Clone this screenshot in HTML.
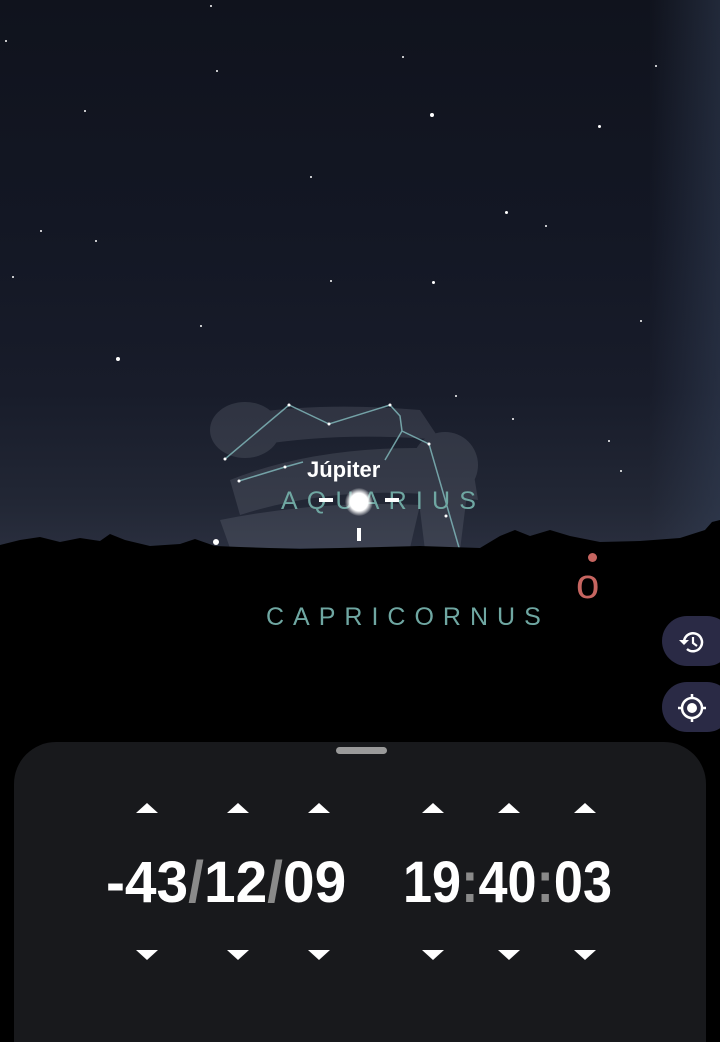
<!DOCTYPE html>
<html><head><meta charset="utf-8"><style>
html,body{margin:0;padding:0}
body{width:720px;height:1005px;overflow:hidden;position:relative;background:#000;font-family:"Liberation Sans",sans-serif}
.sky{position:absolute;left:0;top:0;width:720px;height:560px;background:linear-gradient(180deg,#10131d 0%,#131724 40%,#181c2a 70%,#222735 90%,#2b3040 100%)}
.mw{position:absolute;right:0;top:0;width:70px;height:560px;background:linear-gradient(90deg,rgba(40,50,70,0),rgba(55,68,92,.45))}
.s{position:absolute;background:#fff;border-radius:50%}
.ground{position:absolute;left:0;top:552px;width:720px;height:460px;background:#000}
.lbl{position:absolute;color:#6fa7a2;font-size:25px;white-space:nowrap}
.btn{position:absolute;left:662px;width:70px;height:50px;border-radius:25px;background:#2a2a45}
.panel{position:absolute;left:14px;top:742px;width:692px;height:300px;background:#18191c;border-radius:42px 42px 0 0}
.handle{position:absolute;left:336px;top:747px;width:51px;height:7px;border-radius:4px;background:#9a9a9a}
.up,.dn{position:absolute;width:0;height:0;border-left:11px solid transparent;border-right:11px solid transparent}
.up{top:803px;border-bottom:10px solid #fff}
.dn{top:950px;border-top:10px solid #fff}
.num{position:absolute;top:848px;color:#fff;font-weight:bold;font-size:58px;line-height:70px;white-space:nowrap;transform-origin:0 0}
.g{color:#8a8a8a}
</style></head><body>
<div class="sky"></div><div class="mw"></div>
<div class="s" style="left:430px;top:113px;width:4px;height:4px"></div>
<div class="s" style="left:116px;top:357px;width:4px;height:4px"></div>
<div class="s" style="left:505px;top:211px;width:3px;height:3px"></div>
<div class="s" style="left:432px;top:281px;width:3px;height:3px"></div>
<div class="s" style="left:598px;top:125px;width:3px;height:3px"></div>
<div class="s" style="left:402px;top:56px;width:2px;height:2px"></div>
<div class="s" style="left:216px;top:70px;width:2px;height:2px"></div>
<div class="s" style="left:84px;top:110px;width:2px;height:2px"></div>
<div class="s" style="left:210px;top:5px;width:2px;height:2px"></div>
<div class="s" style="left:545px;top:225px;width:2px;height:2px"></div>
<div class="s" style="left:12px;top:276px;width:2px;height:2px"></div>
<div class="s" style="left:310px;top:176px;width:2px;height:2px"></div>
<div class="s" style="left:512px;top:418px;width:2px;height:2px"></div>
<div class="s" style="left:455px;top:395px;width:2px;height:2px"></div>
<div class="s" style="left:640px;top:320px;width:2px;height:2px"></div>
<div class="s" style="left:200px;top:325px;width:2px;height:2px"></div>
<div class="s" style="left:608px;top:440px;width:2px;height:2px"></div>
<div class="s" style="left:5px;top:40px;width:2px;height:2px"></div>
<div class="s" style="left:655px;top:65px;width:2px;height:2px"></div>
<div class="s" style="left:40px;top:230px;width:2px;height:2px"></div>
<div class="s" style="left:95px;top:240px;width:2px;height:2px"></div>
<div class="s" style="left:330px;top:280px;width:2px;height:2px"></div>
<div class="s" style="left:620px;top:470px;width:2px;height:2px"></div>
<div class="s" style="left:710px;top:530px;width:2px;height:2px"></div>
<svg style="position:absolute;left:0;top:0" width="720" height="560">
<g fill="#8a8f9c" opacity=".2">
<ellipse cx="245" cy="430" rx="35" ry="28"/><path d="M215 420 Q300 400 420 410 L440 440 Q330 430 230 450Z"/>
<path d="M230 480 Q330 440 470 450 L478 500 Q350 480 240 515Z"/>
<ellipse cx="445" cy="465" rx="33" ry="33"/><path d="M415 470 L470 470 L460 550 L425 550Z"/>
<path d="M220 520 Q320 500 420 505 L410 548 L230 548Z"/>
</g>
<g stroke="#7fb5b8" stroke-width="1.5" fill="none" opacity=".85">
<path d="M225 459 L289 405 L329 424 L390 405 L400 416 L402 431 L429 444 L460 551"/>
<path d="M239 481 L285 467 L303 462"/>
<path d="M402 431 L385 460"/>
</g>
<g fill="#fff"><circle cx="289" cy="405" r="1.5"/><circle cx="329" cy="424" r="1.5"/><circle cx="390" cy="405" r="1.5"/><circle cx="429" cy="444" r="1.5"/><circle cx="225" cy="459" r="1.5"/><circle cx="239" cy="481" r="1.5"/><circle cx="285" cy="467" r="1.5"/><circle cx="446" cy="516" r="1.5"/></g>
<circle cx="216" cy="542" r="3" fill="#fff"/>
<circle cx="372" cy="550" r="2" fill="#fff"/>
<path d="M0 545 L20 540 L40 537 L60 542 L80 538 L100 541 L110 534 L125 540 L150 546 L180 544 L195 539 L215 546 L240 547 L300 549 L340 548 L420 546 L480 548 L500 536 L515 530 L530 536 L550 530 L570 536 L600 542 L640 541 L680 538 L705 530 L712 522 L720 520 L720 560 L0 560Z" fill="#000"/>
</svg>
<div class="ground"></div>
<div style="position:absolute;left:307px;top:457px;color:#fff;font-weight:bold;font-size:22px">Júpiter</div>
<div class="lbl" style="left:281px;top:487px;letter-spacing:9.2px">AQUARIUS</div>
<div style="position:absolute;left:345px;top:488px;width:28px;height:28px;border-radius:50%;background:radial-gradient(#fff 45%,rgba(255,255,255,0) 72%)"></div>
<div style="position:absolute;left:319px;top:498px;width:14px;height:4px;background:#fff"></div>
<div style="position:absolute;left:385px;top:498px;width:14px;height:4px;background:#fff"></div>
<div style="position:absolute;left:357px;top:528px;width:4px;height:13px;background:#fff"></div>
<div class="lbl" style="left:266px;top:603px;letter-spacing:9px">CAPRICORNUS</div>
<div style="position:absolute;left:588px;top:553px;width:9px;height:9px;border-radius:50%;background:#c66560"></div>
<div style="position:absolute;left:576px;top:560px;color:#c66560;font-size:42px;line-height:48px">o</div>
<div class="btn" style="top:616px"></div>
<div class="btn" style="top:682px"></div>
<svg style="position:absolute;left:676px;top:627px" width="32" height="30" viewBox="0 0 32 30"><path d="M8 15 A9 9 0 1 1 11 22" stroke="#fff" stroke-width="2.5" fill="none"/><path d="M3 13 L8 18 L13 13Z" fill="#fff"/><path d="M17 10 V16 L21 19" stroke="#fff" stroke-width="2.2" fill="none"/></svg>
<svg style="position:absolute;left:676px;top:692px" width="32" height="32" viewBox="0 0 32 32"><circle cx="16" cy="16" r="10" stroke="#fff" stroke-width="2.5" fill="none"/><circle cx="16" cy="16" r="5" fill="#fff"/><path d="M16 2V7M16 25V30M2 16H7M25 16H30" stroke="#fff" stroke-width="2.5"/></svg>
<div class="panel"></div><div class="handle"></div>
<div class="up" style="left:136px"></div><div class="up" style="left:227px"></div><div class="up" style="left:308px"></div>
<div class="up" style="left:422px"></div><div class="up" style="left:498px"></div><div class="up" style="left:574px"></div>
<div class="dn" style="left:136px"></div><div class="dn" style="left:227px"></div><div class="dn" style="left:308px"></div>
<div class="dn" style="left:422px"></div><div class="dn" style="left:498px"></div><div class="dn" style="left:574px"></div>
<div class="num" style="left:106px;transform:scaleX(0.98)">-43<span class="g">/</span>12<span class="g">/</span>09</div>
<div class="num" style="left:403px;transform:scaleX(0.9)">19<span class="g">:</span>40<span class="g">:</span>03</div>
</body></html>
